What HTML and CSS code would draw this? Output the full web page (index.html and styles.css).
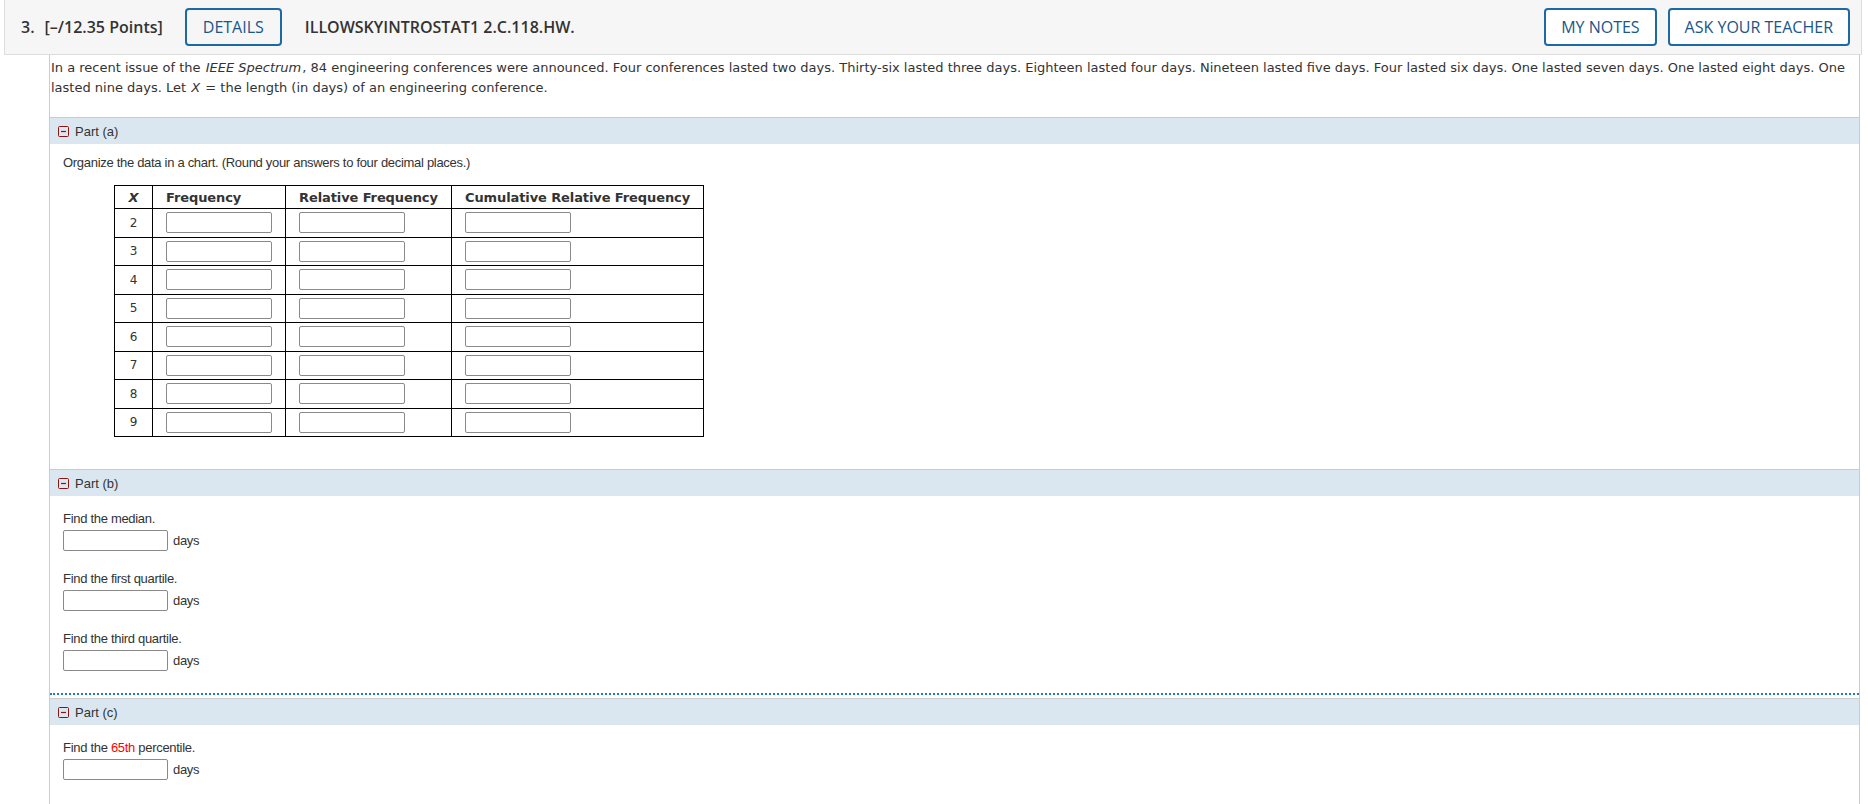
FILE: index.html
```html
<!DOCTYPE html>
<html>
<head>
<meta charset="utf-8">
<link rel="stylesheet" href="styles.css">
</head>
<body>
<div class="qhead">
  <span class="qnum">3.</span>
  <span class="pts">[–/12.35 Points]</span>
  <button class="btn btn-details">DETAILS</button>
  <span class="qtitle">ILLOWSKYINTROSTAT1 2.C.118.HW.</span>
  <span class="spacer"></span>
  <button class="btn">MY NOTES</button>
  <button class="btn">ASK YOUR TEACHER</button>
</div>
<div class="qbody">
  <div class="qtext">In a recent issue of the <i class="em">IEEE Spectrum</i>, 84 engineering conferences were announced. Four conferences lasted two days. Thirty-six lasted three days. Eighteen lasted four days. Nineteen lasted five days. Four lasted six days. One lasted seven days. One lasted eight days. One lasted nine days. Let <i class="em">X</i> = the length (in days) of an engineering conference.</div>

  <div class="part-head">
    <svg class="toggle" width="11" height="11" viewBox="0 0 11 11"><rect x="0.5" y="0.5" width="10" height="10" rx="1" fill="none" stroke="#8b1414"/><line x1="3" y1="5.5" x2="8" y2="5.5" stroke="#8b1414" stroke-width="1.2"/></svg>
    <span>Part (a)</span>
  </div>
  <div class="part-body part-a">
    <div class="prompt">Organize the data in a chart. (Round your answers to four decimal places.)</div>
    <table class="chart">
      <thead>
        <tr><th class="xcol"><i>X</i></th><th class="c1">Frequency</th><th class="c2">Relative Frequency</th><th class="c3">Cumulative Relative Frequency</th></tr>
      </thead>
      <tbody>
        <tr><td class="xcol">2</td><td><input class="box"></td><td><input class="box"></td><td><input class="box"></td></tr>
        <tr><td class="xcol">3</td><td><input class="box"></td><td><input class="box"></td><td><input class="box"></td></tr>
        <tr><td class="xcol">4</td><td><input class="box"></td><td><input class="box"></td><td><input class="box"></td></tr>
        <tr><td class="xcol">5</td><td><input class="box"></td><td><input class="box"></td><td><input class="box"></td></tr>
        <tr><td class="xcol">6</td><td><input class="box"></td><td><input class="box"></td><td><input class="box"></td></tr>
        <tr><td class="xcol">7</td><td><input class="box"></td><td><input class="box"></td><td><input class="box"></td></tr>
        <tr><td class="xcol">8</td><td><input class="box"></td><td><input class="box"></td><td><input class="box"></td></tr>
        <tr><td class="xcol">9</td><td><input class="box"></td><td><input class="box"></td><td><input class="box"></td></tr>
      </tbody>
    </table>
  </div>

  <div class="part-head">
    <svg class="toggle" width="11" height="11" viewBox="0 0 11 11"><rect x="0.5" y="0.5" width="10" height="10" rx="1" fill="none" stroke="#8b1414"/><line x1="3" y1="5.5" x2="8" y2="5.5" stroke="#8b1414" stroke-width="1.2"/></svg>
    <span>Part (b)</span>
  </div>
  <div class="part-body part-b">
    <div class="q">
      <div class="prompt">Find the median.</div>
      <div class="ans"><input class="box"><span class="unit">days</span></div>
    </div>
    <div class="q">
      <div class="prompt">Find the first quartile.</div>
      <div class="ans"><input class="box"><span class="unit">days</span></div>
    </div>
    <div class="q">
      <div class="prompt">Find the third quartile.</div>
      <div class="ans"><input class="box"><span class="unit">days</span></div>
    </div>
  </div>
  <div class="sep"></div>

  <div class="part-head">
    <svg class="toggle" width="11" height="11" viewBox="0 0 11 11"><rect x="0.5" y="0.5" width="10" height="10" rx="1" fill="none" stroke="#8b1414"/><line x1="3" y1="5.5" x2="8" y2="5.5" stroke="#8b1414" stroke-width="1.2"/></svg>
    <span>Part (c)</span>
  </div>
  <div class="part-body part-last">
    <div class="q">
      <div class="prompt">Find the <span class="red">65th</span> percentile.</div>
      <div class="ans"><input class="box"><span class="unit">days</span></div>
    </div>
  </div>
</div>
</body>
</html>
```

FILE: styles.css
```css
html, body {
  margin: 0;
  padding: 0;
  background: #ffffff;
}
body {
  font-family: "Liberation Sans", Arial, sans-serif;
  color: #333333;
}

/* header bar */
.qhead {
  display: flex;
  align-items: center;
  height: 55px;
  box-sizing: border-box;
  margin: 0 6px 0 4px;
  padding: 0 11px 0 16px;
  background: #f6f6f6;
  border: 1px solid #dddddd;
  border-top: none;
  font-family: "Open Sans", sans-serif;
  color: #333333;
}
.qnum,
.pts,
.qtitle {
  font-size: 16px;
  font-weight: 600;
}
.pts {
  margin-left: 10px;
}
.qtitle {
  margin-left: 23px;
}
.spacer {
  flex: 1;
}
.btn {
  height: 38px;
  box-sizing: border-box;
  padding: 0 15px;
  border: 2px solid #1c6aa3;
  border-radius: 4px;
  background: #ffffff;
  color: #1a5688;
  font-family: "Open Sans", sans-serif;
  font-size: 16px;
  font-weight: 400;
}
.btn-details {
  margin-left: 22px;
  padding: 0 16px;
  background: #f6f6f6;
}
.btn + .btn {
  margin-left: 11px;
}

/* body */
.qbody {
  margin: 0 8px 0 49px;
  border-left: 1px solid #cccccc;
  border-right: 1px solid #cccccc;
}
.qtext {
  font-family: "DejaVu Sans", Verdana, sans-serif;
  font-size: 13px;
  line-height: 20px;
  padding: 3px 4px 19px 1px;
  color: #333333;
}
.qtext .em {
  margin: 0 1px;
}

.part-head {
  display: flex;
  align-items: center;
  gap: 6px;
  height: 26px;
  border-top: 1px solid #cccccc;
  background: #dae6f0;
  padding-left: 8px;
  font-size: 13px;
  color: #333333;
}
.toggle {
  display: block;
}

.part-body {
  padding: 15px 0 0 13px;
  font-size: 13px;
}
.part-a {
  padding-top: 11px;
  padding-bottom: 32px;
}
.part-b {
  padding-top: 15px;
}
.part-last {
  padding-bottom: 30px;
}
.prompt {
  line-height: 16px;
  letter-spacing: -0.3px;
}
.red {
  color: #ff0000;
}

.chart {
  border-collapse: collapse;
  margin: 14px 0 0 51px;
  font-family: "DejaVu Sans", Verdana, sans-serif;
  color: #333333;
}
.chart th,
.chart td {
  border: 1px solid #000000;
  padding: 0 13px;
}
.chart th {
  height: 22px;
  font-size: 13px;
  font-weight: bold;
  text-align: left;
  white-space: nowrap;
  letter-spacing: -0.1px;
}
.chart td {
  height: 27.5px;
  font-size: 12px;
}
.chart .xcol {
  width: 11px;
  text-align: center;
}
.chart .c1 { width: 106px; }
.chart .c2 { width: 139px; }
.chart .c3 { width: 221px; }
.chart td .box {
  display: block;
  width: 106px;
  height: 21px;
}

.box {
  box-sizing: border-box;
  width: 105px;
  height: 21px;
  margin: 0;
  border: 1px solid #8a8a8a;
  border-radius: 2px;
  background: #ffffff;
  padding: 0 3px;
}

.q {
  margin-bottom: 20px;
}
.ans {
  display: flex;
  align-items: center;
  margin-top: 3px;
}
.unit {
  margin-left: 5px;
  letter-spacing: -0.3px;
}

.sep {
  border-top: 2px dotted #1b7ad2;
  margin-bottom: 3px;
}
.part-body .q:last-child {
  margin-bottom: 22px;
}
```
